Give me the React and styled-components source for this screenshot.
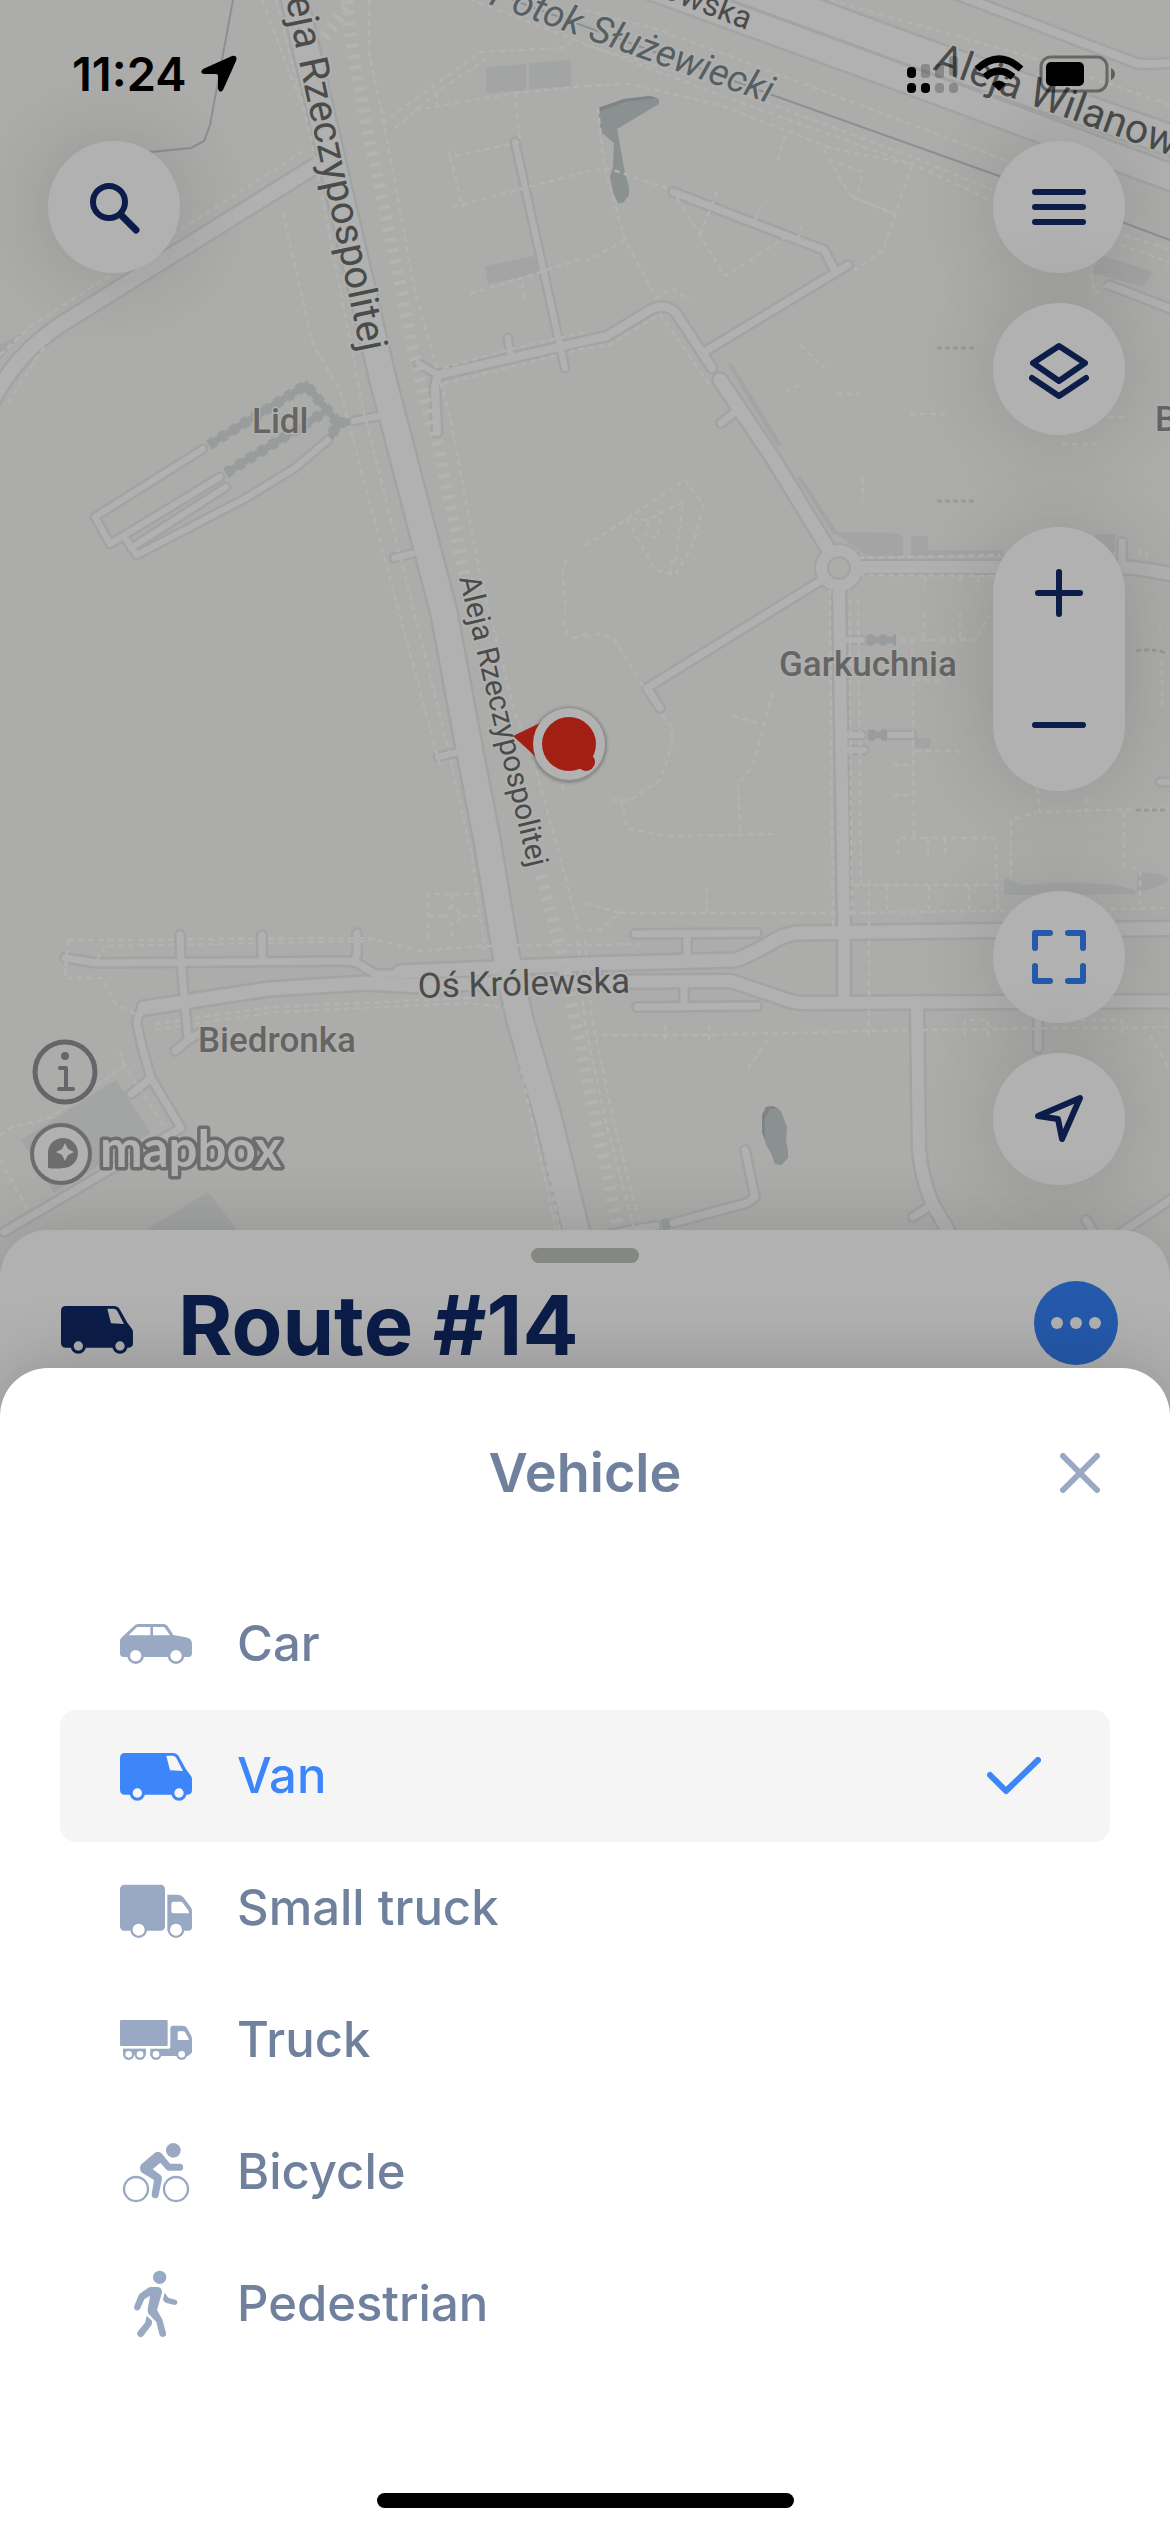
import React, { useState } from "react";
import styled, { createGlobalStyle } from "styled-components";

const color = {
  land: "#acacaa",
  road: "#b1b1b1",
  casing: "#a2a4a4",
  building: "#a3a4a4",
  tunnel: "#989c9d",
  path: "#b3b3b1",
  water: "#8b9091",
  button: "#b1b1b1",
  navy: "#0b1d48",
  blueDim: "#2459ab",
  blue: "#3c86fa",
  label: "#6f819d",
  icon: "#99a9c3",
  selected: "#f5f5f5",
};

const GlobalStyle = createGlobalStyle`
  *, *::before, *::after { box-sizing: border-box; }
  body {
    margin: 0;
    background: #ffffff;
    font-family: Inter, "Liberation Sans", sans-serif;
  }
  button { margin: 0; padding: 0; border: 0; font: inherit; cursor: pointer; }
`;

const Screen = styled.main`
  display: flex;
  flex-direction: column;
  min-height: 100vh;
  overflow: hidden;
  background: ${color.land};
`;

const MapArea = styled.section`
  position: relative;
  display: flex;
  flex-direction: column;
`;

const MapCanvas = styled.svg`
  position: absolute;
  top: 0;
  left: 0;
  width: 100%;
  height: calc(100% + 90px);
  font-family: Roboto, "Open Sans", sans-serif;
`;

const StatusBar = styled.header`
  position: relative;
  display: flex;
  align-items: center;
  justify-content: space-between;
  height: 141px;
  padding: 46px 54px 39px 72px;
  color: #000000;
`;

const StatusGroup = styled.div`
  display: flex;
  align-items: center;
  gap: 14px;
`;

const Clock = styled.time`
  font-size: 47px;
  line-height: 56px;
  font-weight: 600;
`;

const MapControls = styled.div`
  position: relative;
  display: flex;
  justify-content: space-between;
  padding: 0 45px 45px 30px;
`;

const ControlColumn = styled.div`
  display: flex;
  flex-direction: column;
  justify-content: space-between;
  align-items: flex-start;
`;

const SearchSlot = styled.div`
  padding-left: 18px;
`;

const Attribution = styled.div`
  display: flex;
  flex-direction: column;
  gap: 18px;
`;

const AttributionButton = styled.button`
  display: flex;
  background: none;
`;

const LogoLink = styled.a`
  display: flex;
`;

const ControlGroup = styled.div`
  display: flex;
  flex-direction: column;
  gap: 30px;
  margin-top: ${(p) => p.$space || 0}px;
`;

const RoundButton = styled.button`
  display: flex;
  align-items: center;
  justify-content: center;
  width: 132px;
  height: 132px;
  border-radius: 50%;
  background: ${color.button};
  color: ${(p) => (p.$accent ? color.blueDim : color.navy)};
  box-shadow: 0 0 90px rgba(0, 0, 0, 0.16);
`;

const ZoomPill = styled.div`
  display: flex;
  flex-direction: column;
  border-radius: 66px;
  background: ${color.button};
  box-shadow: 0 0 90px rgba(0, 0, 0, 0.16);
`;

const ZoomButton = styled.button`
  display: flex;
  align-items: center;
  justify-content: center;
  width: 132px;
  height: 132px;
  background: none;
  color: ${color.navy};
`;

const RoutePanel = styled.section`
  position: relative;
  display: flex;
  flex-direction: column;
  gap: 18px;
  padding: 18px 0 93px;
  border-radius: 48px 48px 0 0;
  background: ${color.button};
  box-shadow: 0 0 75px rgba(0, 0, 0, 0.16);
`;

const Grabber = styled.div`
  align-self: center;
  width: 108px;
  height: 15px;
  border-radius: 8px;
  background: #858783;
`;

const RouteHeader = styled.div`
  display: flex;
  align-items: center;
  padding: 0 52px 0 61px;
  color: ${color.navy};
`;

const RouteIcon = styled.div`
  display: flex;
  align-self: flex-end;
`;

const RouteTitle = styled.h1`
  flex: 1;
  margin: 0;
  padding: 4px 0 0 45px;
  font-size: 83px;
  line-height: 80px;
  font-weight: 700;
`;

const MoreButton = styled.button`
  display: flex;
  align-items: center;
  justify-content: center;
  width: 84px;
  height: 84px;
  border-radius: 50%;
  background: ${color.blueDim};
`;

const Sheet = styled.section`
  position: relative;
  display: flex;
  flex: 1;
  flex-direction: column;
  margin-top: -90px;
  border-radius: 48px 48px 0 0;
  background: #ffffff;
  box-shadow: 0 0 75px rgba(0, 0, 0, 0.2);
`;

const SheetHeader = styled.div`
  display: grid;
  grid-template-columns: 60px 1fr 60px;
  align-items: center;
  height: 210px;
  padding: 0 60px;
`;

const SheetTitle = styled.h2`
  grid-column: 2;
  margin: 0;
  text-align: center;
  font-size: 54px;
  line-height: 66px;
  font-weight: 600;
  color: ${color.label};
`;

const CloseButton = styled.button`
  display: flex;
  align-items: center;
  justify-content: center;
  height: 60px;
  background: none;
  color: ${color.icon};
`;

const VehicleList = styled.fieldset`
  display: flex;
  flex-direction: column;
  margin: 0;
  padding: 0 60px;
  border: 0;
  min-width: 0;
`;

const VehicleRow = styled.label`
  position: relative;
  display: flex;
  align-items: center;
  gap: 45px;
  height: 132px;
  padding: 0 69px 0 60px;
  border-radius: 16px;
  font-size: 49px;
  line-height: 60px;
  font-weight: 500;
  cursor: pointer;
  background: ${(p) => (p.$selected ? color.selected : "transparent")};
  color: ${(p) => (p.$selected ? color.blue : color.label)};
`;

const VehicleInput = styled.input`
  position: absolute;
  inset: 0;
  margin: 0;
  appearance: none;
  cursor: pointer;
`;

const VehicleName = styled.span`
  flex: 1;
`;

const IconBox = styled.svg`
  display: block;
  flex: none;
  width: 72px;
  height: 72px;
  fill: ${(p) => p.$tone};
  stroke: none;
  .hole { fill: ${(p) => p.$hole}; }
  .ring { fill: none; stroke: ${(p) => p.$tone}; stroke-width: 7; }
`;

const LineIcon = styled.svg`
  display: block;
  fill: none;
  stroke: currentColor;
  stroke-width: 6;
  stroke-linecap: round;
  stroke-linejoin: round;
`;

const HomeArea = styled.footer`
  display: flex;
  flex: 1;
  align-items: flex-end;
  justify-content: center;
  padding: 60px 0 24px;
`;

const HomeIndicator = styled.div`
  width: 417px;
  height: 15px;
  border-radius: 8px;
  background: #000000;
`;

const shapes = {
  car: (
    <>
      <path d="M0 98Q0 93 4 89L43 53Q48 48 55 48H131Q138 48 142 53L160 81L198 88Q216 92 216 108V136Q216 147 205 147H11Q0 147 0 136Z" />
      <circle cx="47" cy="143" r="25" />
      <circle cx="168" cy="143" r="25" />
      <path className="hole" d="M53 57H91V82H26L48 60Q50 57 53 57ZM99 57H130Q133 57 135 60L150 82H99Z" />
      <circle className="hole" cx="47" cy="143" r="17" />
      <circle className="hole" cx="168" cy="143" r="17" />
    </>
  ),
  van: (
    <>
      <path d="M15 39H158Q171 39 177 50L198 88L213 108Q216 112 216 118V150Q216 164 203 164H15Q0 164 0 149V54Q0 39 15 39Z" />
      <circle cx="52" cy="159" r="23" />
      <circle cx="177" cy="159" r="23" />
      <path className="hole" d="M139 47H159Q166 48 169 54L189 93L150 91Z" />
      <circle className="hole" cx="52" cy="159" r="14" />
      <circle className="hole" cx="177" cy="159" r="14" />
    </>
  ),
  smallTruck: (
    <>
      <rect x="0" y="38" width="135" height="138" rx="13" />
      <circle cx="56" cy="173" r="25" />
      <path d="M142 68H174Q184 68 190 76L212 105Q216 110 216 116V165Q216 176 205 176H142Z" />
      <circle cx="168" cy="173" r="25" />
      <path className="hole" d="M161 89H182Q186 89 188 92L204 114Q207 118 207 124H161Q154 124 154 117V96Q154 89 161 89Z" />
      <circle className="hole" cx="56" cy="173" r="18" />
      <circle className="hole" cx="168" cy="173" r="18" />
    </>
  ),
  truck: (
    <>
      <rect x="0" y="48" width="143" height="78" rx="4" />
      <path d="M9 134H78V151H9Z" />
      <circle cx="26" cy="151" r="17" />
      <circle cx="60" cy="151" r="17" />
      <path d="M159 65H188Q197 65 201 72L214 96Q216 100 216 106V142Q216 148 211 151L203 156H91V134H146Q151 134 151 129V73Q151 65 159 65Z" />
      <circle cx="108" cy="151" r="17" />
      <circle cx="185" cy="151" r="17" />
      <path className="hole" d="M176 82H190Q193 82 195 85L204 100Q206 103 206 108H176Q173 108 173 105V85Q173 82 176 82Z" />
      <circle className="hole" cx="26" cy="151" r="10" />
      <circle className="hole" cx="60" cy="151" r="10" />
      <circle className="hole" cx="108" cy="151" r="10" />
      <circle className="hole" cx="185" cy="151" r="10" />
    </>
  ),
  bicycle: (
    <>
      <circle className="ring" cx="48" cy="159" r="36" />
      <circle className="ring" cx="168" cy="159" r="36" />
      <circle cx="160" cy="43" r="22" />
      <path d="M104 51Q115 43 126 53L150 83H179A10 10 0 0 1 179 104H145Q141 104 138 100L121 80L98 100L121 116Q127 121 126 129L116 177A10 10 0 0 1 95 175L102 132L66 110Q54 98 64 85Z" />
    </>
  ),
  pedestrian: (
    <>
      <circle cx="119" cy="28" r="20" />
      <path d="M92 57H110Q127 57 126 74L111 126L125 151Q127 154 128 158L138 194A10 10 0 0 1 118 199L109 162L86 138Q82 133 83 125L90 83L73 94L61 121A9 9 0 0 1 43 114L55 84Q57 79 61 76L84 60Q88 57 92 57Z" />
      <path d="M134 74L145 89L168 96A8 8 0 0 1 164 111L139 105Q133 103 129 95Z" />
      <path d="M80 143L96 158Q97 167 93 173L70 203A10 10 0 0 1 54 190L74 166Q76 163 80 143Z" />
    </>
  ),
};

function VehicleIcon({ kind, tone, hole }) {
  return (
    <IconBox viewBox="0 0 216 216" $tone={tone} $hole={hole} aria-hidden="true">
      {shapes[kind]}
    </IconBox>
  );
}

const roads = [
  { w: 15, d: "M320 163L60 325Q15 355 -8 402" },
  { w: 26, d: "M600 -32L921 85L1170 177L1200 188" },
  { w: 30, d: "M700 -28L921 53L1170 140L1200 151" },
  { w: 9, d: "M950 -8L1136 63Q1145 66 1200 60" },
  { w: 7, d: "M515 142L565 368" },
  { w: 9, d: "M437 432L435 387L438 375L585 341L607 336L650 310Q665 302 676 313L712 368" },
  { w: 7, d: "M418 363L438 375M508 338L511 357" },
  { w: 14, d: "M720 380L774 460L830 552" },
  { w: 8, d: "M704 352L848 265M833 267L824 250L673 192M721 423L734 413" },
  { w: 8, d: "M825 578L647 688L660 708" },
  { w: 13, d: "M858 567H1115Q1135 566 1200 580" },
  { w: 13, d: "M839 588L844 920V1002" },
  { w: 8, d: "M1122 542V565M1109 285L1200 320" },
  { w: 14, d: "M144 1008L269 989L366 983L440 987" },
  { w: 14, d: "M400 972L585 964L734 960Q745 958 779 938Q790 933 801 933L1200 928" },
  { w: 13, d: "M400 985L585 982L731 981L790 1001Q796 1003 809 1003L1200 1001" },
  { w: 8, d: "M65 958L97 963L354 961L375 974H410M180 935L181 961L188 1040L175 1051M188 1040L200 1033M262 935V961M357 933V955L353 962" },
  { w: 8, d: "M635 934L757 933M687 934V958M637 1007L757 1006M684 983V1006" },
  { w: 8, d: "M150 1006Q137 1010 137 1024L142 1047L151 1078L181 1128L4 1232M151 1078L131 1094" },
  { w: 13, d: "M917 1007L919 1150Q922 1180 932 1203L965 1260" },
  { w: 8, d: "M913 1217L930 1206M745 1150L755 1197L747 1203L673 1223M656 1226L610 1234" },
  { w: 8, d: "M1200 1180L1110 1240M1086 1220L1100 1242M1038 1006V1048" },
  { w: 7, d: "M203 449L95 517L110 544L220 477M226 487L131 548M125 538L137 555L246 498L295 468L328 440" },
  { w: 7, d: "M354 421L378 416M394 558L414 553M438 757L458 752" },
  { w: 7, d: "M844 640H862M844 735H862M890 735H912M844 750H864M1160 782H1190" },
  { w: 26, d: "M290 -20L383 380L444 613L469 747L487 840L507 960L520 1020L547 1113L576 1230L590 1300" },
];

const footpaths = [
  "M276 0L310 133L364 413L396 540L448 747L472 857L485 950M262 0L300 100M369 0L369 53L384 123L414 287L450 417L481 580L515 713L534 763L560 857L580 933",
  "M283 213L313 345L340 390L385 560L440 765",
  "M512 1020L540 1130L560 1230M508 1010L556 1230M585 940L592 1020L615 1127L641 1227M578 940L585 1025L607 1127L634 1227",
  "M460 -5L575 40L720 95L915 165L990 200M585 45L720 85L915 158L992 190M585 10L660 30L860 105L1005 160M830 0L1040 60L1170 105M1125 235L1170 250M1120 245L1170 262",
  "M382 123L470 60L480 52L562 48L575 40M395 128L437 92L485 60M437 92L437 106M415 110L515 93L585 86M515 93L520 142L450 157L448 146M450 157L463 207M452 207L585 172M470 294L585 258M522 283L526 303",
  "M0 355L28 328L305 150M8 402L50 338L312 175M585 86L630 84L720 105L790 132L830 148L915 165M598 108L604 165L625 240L656 298L672 288L690 300",
  "M585 172L607 168L672 190L700 235L725 276L785 238M700 235L717 192M755 220L761 206M798 240L803 220M785 136L778 160M824 150L830 160L862 172L858 195L850 197L895 213M828 158L850 195L895 215M912 165L883 250L856 270L842 262M625 240L585 262",
  "M443 368L507 350L585 332M443 384L585 348L610 345L660 314L710 385M1091 273L1095 293L1109 283M800 345L825 368M785 392L800 385M837 394H860M910 414H945M1062 444H1095M1108 417H1125",
  "M585 546L627 519L685 480L703 505L693 545L675 575L655 570L627 519L648 520L683 502L675 565M648 520L646 535L657 538L660 520L660 510M670 575L672 560M863 478V500M1062 548V570",
  "M585 637L602 633L615 640L645 690L672 728V745L660 780L630 800H613M621 800L627 828L665 836L775 834M773 692L753 765L738 785L740 834M733 716L764 725",
  "M848 590L855 575L1000 576M858 558L1000 555M830 590L833 940M850 600V700L852 920M858 600L861 885M925 576V588M960 576V588M978 576V588M924 612V640M960 612V640M900 640H975L990 615M912 640L914 840M914 680H945M915 751H958L960 758M893 765H914M893 795H914M898 855V838H995L998 910M928 838V855M945 838V855M853 885H998M887 885V910M929 885V910M969 885V910",
  "M563 790L561 775M620 913H833L998 911L1170 908M707 888V913M585 903L620 913L600 930H585M869 880V1040M602 1035H700L917 1030L1170 1027M665 1025V1045M709 1025V1045M768 1040L748 1068M965 1036V1020H988V1038M1070 1020H1122V1035M1150 1035L1170 1070M1037 788L1040 812L1170 808M1011 876V820L1037 812M1124 812V865L1140 870V905M1086 798V812M1162 650V707M1160 625V630M1137 565L1170 578M1140 555V545M1147 558V547",
  "M68 940L115 940L370 938L420 951L480 946L640 944M108 946L370 941M68 940L65 978H102L115 1003L137 1015M97 960L108 940M155 1030L275 1012L470 1003L510 1008M155 1024L270 1007L470 998M65 958V978M428 938V894H480M452 894V905M452 930V937M428 916H445M462 916H482M452 905L445 916L452 925L462 916L452 905",
  "M0 1135L12 1127L50 1118L125 1066L165 1128M0 1160L28 1210M120 1050L124 1066M566 560Q560 575 566 605Q560 635 575 638L590 632",
];

function StreetMap() {
  return (
    <MapCanvas viewBox="0 0 1170 1320" preserveAspectRatio="xMidYMin slice" role="img" aria-label="Street map">
      <g fill={color.building}>
        <path d="M486 67L526 64V90L486 93ZM529 63L571 60V86L529 89ZM485 266L534 256L539 273L488 284ZM0 345L22 333L0 360Z" />
        <path d="M835 532L897 533L903 537V556H867L845 540ZM911 536H928V556H911ZM928 550H1003V556H928ZM1095 534H1115V552H1095ZM1092 273L1100 255L1154 272L1143 287Z" />
        <path d="M1004 878L1025 885L1063 882L1110 884L1135 890V894L1004 895ZM1137 872L1160 874L1170 880L1155 888L1137 892ZM915 738H930V748H915Z" />
        <path d="M21 1140L116 1080L151 1133L54 1193ZM146 1230L208 1192L237 1230Z" />
        <path d="M728 364L732 364L782 445L777 447ZM797 477L801 477L839 534L833 534Z" />
      </g>
      <g fill="none" stroke="#8a9193" strokeWidth="2">
        <path d="M233 0L210 125L204 141L191 148L140 153" />
        <path d="M480 -12L775 96L999 176L1170 240" />
      </g>
      <g fill={color.water}>
        <path d="M598 108L624 99L650 96L659 99V104L617 129L625 173L629 187V195L623 203H618L613 192L610 177L613 167L614 143L601 132Z" />
        <path d="M762 1115L766 1107L773 1106L781 1111L787 1127L786 1140L788 1150V1158L781 1165L775 1164L771 1153L766 1145L763 1133Z" />
        <path fill="#7f8586" d="M598 108L624 99L650 96L657 98L625 102L598 112ZM762 1115L766 1107L773 1106L779 1109L770 1109L765 1118V1140L762 1133Z" />
      </g>
      <g fill="none" stroke={color.casing} strokeLinecap="round" strokeLinejoin="round">
        {roads.map((r) => <path key={r.d} d={r.d} strokeWidth={r.w + 4} />)}
      </g>
      <circle cx="839" cy="568" r="25" fill={color.casing} />
      <g fill="none" stroke={color.path} strokeWidth="2.4" strokeDasharray="6 4">
        {footpaths.map((d) => <path key={d} d={d} />)}
      </g>
      <g fill="none" stroke={color.tunnel}>
        <path strokeWidth="7" d="M209 445L306 385L338 423L330 438M226 473L323 413M338 423L350 422M867 640H896M868 735H887M662 1225L672 1223" />
        <path strokeWidth="11" strokeDasharray="7 6" d="M209 445L306 385L338 423L330 438M226 473L323 413M338 423L350 422M867 640H896M868 735H887M662 1225L672 1223" />
      </g>
      <g fill="none" stroke={color.road} strokeLinecap="round" strokeLinejoin="round">
        {roads.map((r) => <path key={r.d} d={r.d} strokeWidth={r.w - 1} />)}
      </g>
      <circle cx="839" cy="568" r="23" fill={color.road} />
      <circle cx="839" cy="568" r="11" fill={color.land} stroke={color.casing} strokeWidth="2" />
      <g fill="none" stroke="#b3b3b2" strokeWidth="12" strokeDasharray="4 7">
        <path d="M347 0L352 50L367 127L395 260L414 353L425 400L437 440L465 577M541 875L560 947L575 1020L592 1103L619 1232M347 8L322 40" />
      </g>
      <g fill="none" stroke="#989999" strokeWidth="3" strokeDasharray="5 3">
        <path d="M937 348H974M937 501H974M1136 651Q1150 648 1166 653M1136 810H1166" />
      </g>

      <g fill="#4a4b4b" stroke="#b0b0af" strokeWidth="4" strokeLinejoin="round" paintOrder="stroke">
        <text transform="translate(361 353) rotate(78)" textAnchor="end" fontSize="40">Aleja Rzeczypospolitej</text>
        <text transform="translate(459 578) rotate(76.5)" fontSize="30">Aleja Rzeczypospolitej</text>
        <text transform="translate(418 998) rotate(-1.5)" fontSize="35">Oś Królewska</text>
        <text transform="translate(932 69) rotate(20)" fontSize="41">Aleja Wilanowska</text>
        <text transform="translate(747 30) rotate(21)" textAnchor="end" fontSize="32">Aleja Wilanowska</text>
        <text transform="translate(488 4) rotate(19.5)" fontSize="38" fontStyle="italic" fill="#566062">Potok Służewiecki</text>
      </g>
      <g fill="#656565" stroke="#b0b0af" strokeWidth="3" strokeLinejoin="round" paintOrder="stroke" fontSize="35" fontWeight="500">
        <text x="252" y="433">Lidl</text>
        <text x="779" y="676">Garkuchnia</text>
        <text x="198" y="1052">Biedronka</text>
        <text x="1155" y="431">B</text>
      </g>

      <g>
        <circle cx="569" cy="745" r="40" fill="#000000" opacity="0.06" />
        <circle cx="569" cy="745" r="38" fill="#000000" opacity="0.12" />
        <path d="M513 736L542 722L536 757Z" fill="#a21f14" />
        <circle cx="569" cy="744" r="36" fill="#b2b2b2" />
        <circle cx="569" cy="744" r="27" fill="#a21f14" />
        <circle cx="586" cy="762" r="9" fill="#a21f14" />
      </g>
    </MapCanvas>
  );
}

function StatusIcons() {
  return (
    <StatusGroup>
      <svg width="210" height="44" viewBox="906 52 210 44" role="img" aria-label="Signal, Wi-Fi and battery">
        <rect x="907" y="67" width="9" height="11" rx="4" />
        <rect x="907" y="83" width="9" height="10" rx="4" />
        <rect x="921" y="83" width="9" height="10" rx="4" />
        <g opacity="0.22">
          <rect x="921" y="64" width="9" height="14" rx="3" />
          <rect x="935" y="64" width="9" height="14" rx="3" />
          <rect x="949" y="56" width="9" height="20" rx="3" />
          <rect x="935" y="83" width="9" height="10" rx="4" />
          <rect x="949" y="83" width="9" height="10" rx="4" />
        </g>
        <g fill="none" stroke="#000000" strokeWidth="7">
          <path d="M977 69Q999 49 1021 69" />
          <path d="M985 77Q999 65 1013 77" />
        </g>
        <path d="M992 84Q999 77 1006 84L999 91Z" />
        <rect x="1041" y="57" width="66" height="34" rx="10" fill="none" stroke="#000000" strokeOpacity="0.4" strokeWidth="3" />
        <rect x="1046" y="62" width="38" height="24" rx="5" />
        <path d="M1111 68Q1115 70 1115 74T1111 80Z" opacity="0.45" />
      </svg>
    </StatusGroup>
  );
}

const vehicles = [
  { id: "car", name: "Car" },
  { id: "van", name: "Van" },
  { id: "smallTruck", name: "Small truck" },
  { id: "truck", name: "Truck" },
  { id: "bicycle", name: "Bicycle" },
  { id: "pedestrian", name: "Pedestrian" },
];

export default function App() {
  const [vehicle, setVehicle] = useState("van");

  return (
    <>
      <GlobalStyle />
      <Screen>
        <MapArea>
          <StreetMap />
          <StatusBar>
            <StatusGroup>
              <Clock>11:24</Clock>
              <svg width="36" height="38" viewBox="0 0 36 38" aria-hidden="true">
                <path d="M31 1Q37 0 35 6L22 35Q19 39 17 34V21Q17 19 15 19H3Q-2 18 2 14Z" />
              </svg>
            </StatusGroup>
            <StatusIcons />
          </StatusBar>

          <MapControls>
            <ControlColumn>
              <SearchSlot>
                <RoundButton aria-label="Search">
                  <LineIcon width="54" height="54" viewBox="0 0 54 54">
                    <circle cx="22" cy="22" r="16" />
                    <path d="M34 35L49 50" strokeWidth="7" />
                  </LineIcon>
                </RoundButton>
              </SearchSlot>
              <Attribution>
                <AttributionButton aria-label="Map information">
                  <svg width="70" height="66" viewBox="0 0 70 66" fill="none" stroke="#656669">
                    <circle cx="35" cy="33" r="30" strokeWidth="5" />
                    <circle cx="35" cy="17" r="4" fill="#656669" stroke="none" />
                    <path d="M30 29H36V50M29 50H43" strokeWidth="4" strokeLinecap="round" strokeLinejoin="round" />
                  </svg>
                </AttributionButton>
                <LogoLink href="#mapbox" aria-label="Mapbox">
                  <svg width="262" height="62" viewBox="0 0 262 62">
                    <circle cx="31" cy="31" r="29" fill={color.button} stroke="#6c6d6c" strokeWidth="4" />
                    <path d="M18 45V29A15 15 0 1 1 33 45Q26 46 18 45Z" fill="#6c6d6c" />
                    <path d="M35 20L38 26L44 29L38 32L35 38L32 32L26 29L32 26Z" fill={color.button} />
                    <text
                      x="70"
                      y="44"
                      fontFamily="Lato, sans-serif"
                      fontWeight="700"
                      fontSize="51"
                      fill={color.button}
                      stroke="#6c6d6c"
                      strokeWidth="7"
                      strokeLinejoin="round"
                      paintOrder="stroke"
                    >
                      mapbox
                    </text>
                  </svg>
                </LogoLink>
              </Attribution>
            </ControlColumn>

            <div>
              <ControlGroup>
                <RoundButton aria-label="Menu">
                  <LineIcon width="54" height="48" viewBox="0 0 54 48">
                    <path d="M3 9H51M3 24H51M3 39H51" />
                  </LineIcon>
                </RoundButton>
                <RoundButton aria-label="Map layers">
                  <LineIcon width="60" height="60" viewBox="0 0 60 60">
                    <path d="M30 7L56 24L30 42L4 24ZM3 39L30 57L57 39" />
                  </LineIcon>
                </RoundButton>
              </ControlGroup>
              <ControlGroup $space={92}>
                <ZoomPill>
                  <ZoomButton aria-label="Zoom in">
                    <LineIcon width="54" height="54" viewBox="0 0 54 54">
                      <path d="M6 27H48M27 6V48" />
                    </LineIcon>
                  </ZoomButton>
                  <ZoomButton aria-label="Zoom out">
                    <LineIcon width="54" height="54" viewBox="0 0 54 54">
                      <path d="M3 27H51" />
                    </LineIcon>
                  </ZoomButton>
                </ZoomPill>
              </ControlGroup>
              <ControlGroup $space={100}>
                <RoundButton $accent aria-label="Fit route">
                  <LineIcon width="54" height="54" viewBox="0 0 54 54">
                    <path d="M3 18V3H18M36 3H51V18M51 36V51H36M18 51H3V36" />
                  </LineIcon>
                </RoundButton>
                <RoundButton aria-label="My location">
                  <LineIcon width="54" height="54" viewBox="0 0 54 54">
                    <path d="M48 6L30 47L26 27L6 24Z" />
                  </LineIcon>
                </RoundButton>
              </ControlGroup>
            </div>
          </MapControls>
        </MapArea>

        <RoutePanel>
          <Grabber />
          <RouteHeader>
            <RouteIcon>
              <VehicleIcon kind="van" tone={color.navy} hole="#aeaeae" />
            </RouteIcon>
            <RouteTitle>Route #14</RouteTitle>
            <MoreButton aria-label="More options">
              <svg width="54" height="12" viewBox="0 0 54 12" fill="#b1b1b1">
                <circle cx="8" cy="6" r="6" />
                <circle cx="27" cy="6" r="6" />
                <circle cx="46" cy="6" r="6" />
              </svg>
            </MoreButton>
          </RouteHeader>
        </RoutePanel>

        <Sheet role="dialog" aria-labelledby="vehicle-title">
          <SheetHeader>
            <SheetTitle id="vehicle-title">Vehicle</SheetTitle>
            <CloseButton aria-label="Close">
              <LineIcon width="40" height="40" viewBox="0 0 40 40">
                <path d="M3 3L37 37M37 3L3 37" />
              </LineIcon>
            </CloseButton>
          </SheetHeader>
          <VehicleList aria-labelledby="vehicle-title">
            {vehicles.map((v) => {
              const selected = v.id === vehicle;
              return (
                <VehicleRow key={v.id} htmlFor={v.id} $selected={selected}>
                  <VehicleInput
                    type="radio"
                    name="vehicle"
                    id={v.id}
                    checked={selected}
                    onChange={() => setVehicle(v.id)}
                  />
                  <VehicleIcon
                    kind={v.id}
                    tone={selected ? color.blue : color.icon}
                    hole={selected ? color.selected : "#ffffff"}
                  />
                  <VehicleName>{v.name}</VehicleName>
                  {selected && (
                    <LineIcon width="54" height="38" viewBox="0 0 54 38" aria-hidden="true">
                      <path d="M3 18L19 34L51 3" />
                    </LineIcon>
                  )}
                </VehicleRow>
              );
            })}
          </VehicleList>
          <HomeArea>
            <HomeIndicator />
          </HomeArea>
        </Sheet>
      </Screen>
    </>
  );
}
